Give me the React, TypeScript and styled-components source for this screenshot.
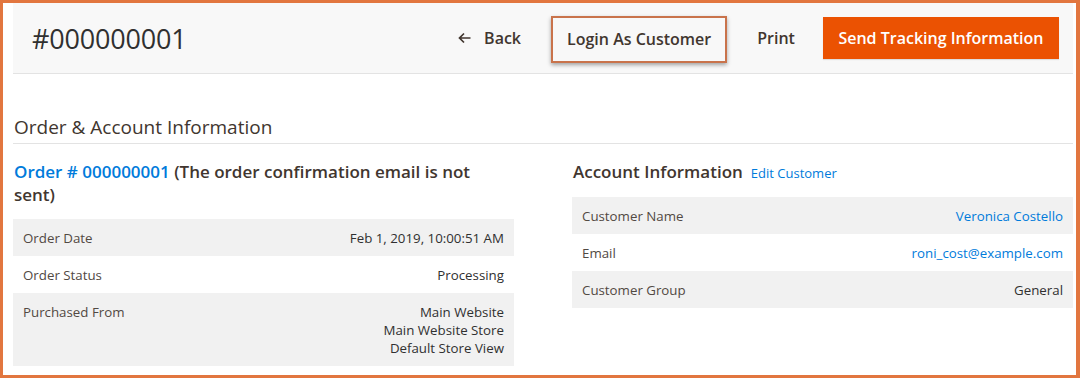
import React from "react";
import styled, { createGlobalStyle } from "styled-components";

const GlobalStyle = createGlobalStyle`
    html, body {
        margin: 0;
        padding: 0;
        background: #ffffff;
    }
    body {
        font-family: "Open Sans", "Liberation Sans", sans-serif;
        color: #41362f;
    }
`;

const Frame = styled.div`
    width: 1080px;
    height: 378px;
    box-sizing: border-box;
    border: 3px solid #e2763f;
    border-right-width: 4px;
    padding: 0 3px 0 10px;
    overflow: hidden;
    background: #ffffff;
`;

const PageHeader = styled.header`
    height: 70px;
    background: #f8f8f8;
    border-bottom: 1px solid #e3e3e3;
    display: flex;
    align-items: center;
    justify-content: space-between;
    padding: 0 14px 0 19px;
`;

const PageTitle = styled.h1`
    margin: 0;
    font-size: 27px;
    font-weight: 400;
    color: #303030;
    letter-spacing: -0.2px;
`;

const Actions = styled.div`
    display: flex;
    align-items: center;
    gap: 15px;
`;

const ActionButton = styled.button<{ $primary?: boolean; $marked?: boolean }>`
    display: inline-flex;
    align-items: center;
    gap: 13px;
    height: ${(p) => (p.$marked ? "47px" : "42px")};
    box-sizing: border-box;
    padding: 0 ${(p) => (p.$marked ? "14px" : p.$primary ? "15.5px" : "15px")};
    margin-top: ${(p) => (p.$marked ? "2px" : "0")};
    margin-left: ${(p) => (p.$primary ? "-2px" : "0")};
    font-family: "Open Sans", "Liberation Sans", sans-serif;
    font-size: 16px;
    font-weight: 600;
    color: ${(p) => (p.$primary ? "#ffffff" : "#41362f")};
    background: ${(p) => (p.$primary ? "#eb5202" : "transparent")};
    border: ${(p) => (p.$marked ? "2px solid #c9734b" : "none")};
    box-shadow: ${(p) =>
        p.$marked ? "0 2px 4px rgba(0, 0, 0, 0.35)" : p.$primary ? "0 1px 1px rgba(0,0,0,0.1)" : "none"};
    cursor: pointer;
`;

const BackArrow = () => (
    <svg width="13" height="12" viewBox="0 0 13 12" fill="none">
        <path d="M12.5 6H1.5M6 1.5L1.5 6L6 10.5" stroke="#41362f" strokeWidth="1.7" />
    </svg>
);

const Content = styled.main``;

const SectionTitle = styled.h2`
    margin: 41px 0 0;
    padding: 0 0 4px 1px;
    font-size: 19px;
    font-weight: 400;
    line-height: 24px;
    color: #41362f;
    border-bottom: 1px solid #e3e3e3;
`;

const Columns = styled.div`
    display: grid;
    grid-template-columns: 501px 501px;
    column-gap: 58px;
    margin-top: 16px;
`;

const Column = styled.section``;

const ColumnTitle = styled.h3<{ $tight?: boolean }>`
    margin: 0 0 ${(p) => (p.$tight ? "12px" : "13px")};
    padding-left: 1px;
    font-size: 17px;
    font-weight: 600;
    line-height: 23px;
    color: #41362f;
`;

const Link = styled.a<{ $small?: boolean }>`
    color: #007bdb;
    text-decoration: none;
    font-weight: ${(p) => (p.$small ? 400 : "inherit")};
    font-size: ${(p) => (p.$small ? "13px" : "inherit")};
    margin-left: ${(p) => (p.$small ? "8px" : "0")};
`;

const InfoTable = styled.table`
    width: 100%;
    border-collapse: collapse;
    font-size: 13.3px;
    line-height: 18px;
`;

const Row = styled.tr<{ $shaded?: boolean }>`
    background: ${(p) => (p.$shaded ? "#f1f1f1" : "transparent")};
`;

const Label = styled.th`
    text-align: left;
    vertical-align: top;
    font-weight: 400;
    color: #514943;
    padding: 10px 10px 9px;
`;

const Value = styled.td`
    text-align: right;
    vertical-align: top;
    color: #303030;
    padding: 10px 10px 9px;
`;

type Item = { label: string; value: React.ReactNode };

const orderRows: Item[] = [
    { label: "Order Date", value: "Feb 1, 2019, 10:00:51 AM" },
    { label: "Order Status", value: "Processing" },
    {
        label: "Purchased From",
        value: (
            <>
                Main Website
                <br />
                Main Website Store
                <br />
                Default Store View
            </>
        ),
    },
];

const accountRows: Item[] = [
    { label: "Customer Name", value: <Link href="#">Veronica Costello</Link> },
    { label: "Email", value: <Link href="#">roni_cost@example.com</Link> },
    { label: "Customer Group", value: "General" },
];

const Table = ({ rows }: { rows: Item[] }) => (
    <InfoTable>
        <tbody>
            {rows.map((r, i) => (
                <Row key={r.label} $shaded={i % 2 === 0}>
                    <Label>{r.label}</Label>
                    <Value>{r.value}</Value>
                </Row>
            ))}
        </tbody>
    </InfoTable>
);

export default function App() {
    return (
        <>
            <GlobalStyle />
            <Frame>
                <PageHeader>
                    <PageTitle>#000000001</PageTitle>
                    <Actions>
                        <ActionButton>
                            <BackArrow />
                            Back
                        </ActionButton>
                        <ActionButton $marked>Login As Customer</ActionButton>
                        <ActionButton>Print</ActionButton>
                        <ActionButton $primary>Send Tracking Information</ActionButton>
                    </Actions>
                </PageHeader>
                <Content>
                    <SectionTitle>Order &amp; Account Information</SectionTitle>
                    <Columns>
                        <Column>
                            <ColumnTitle>
                                <Link href="#">Order # 000000001</Link> (The order confirmation email is not
                                sent)
                            </ColumnTitle>
                            <Table rows={orderRows} />
                        </Column>
                        <Column>
                            <ColumnTitle $tight>
                                Account Information
                                <Link href="#" $small>
                                    Edit Customer
                                </Link>
                            </ColumnTitle>
                            <Table rows={accountRows} />
                        </Column>
                    </Columns>
                </Content>
            </Frame>
        </>
    );
}
